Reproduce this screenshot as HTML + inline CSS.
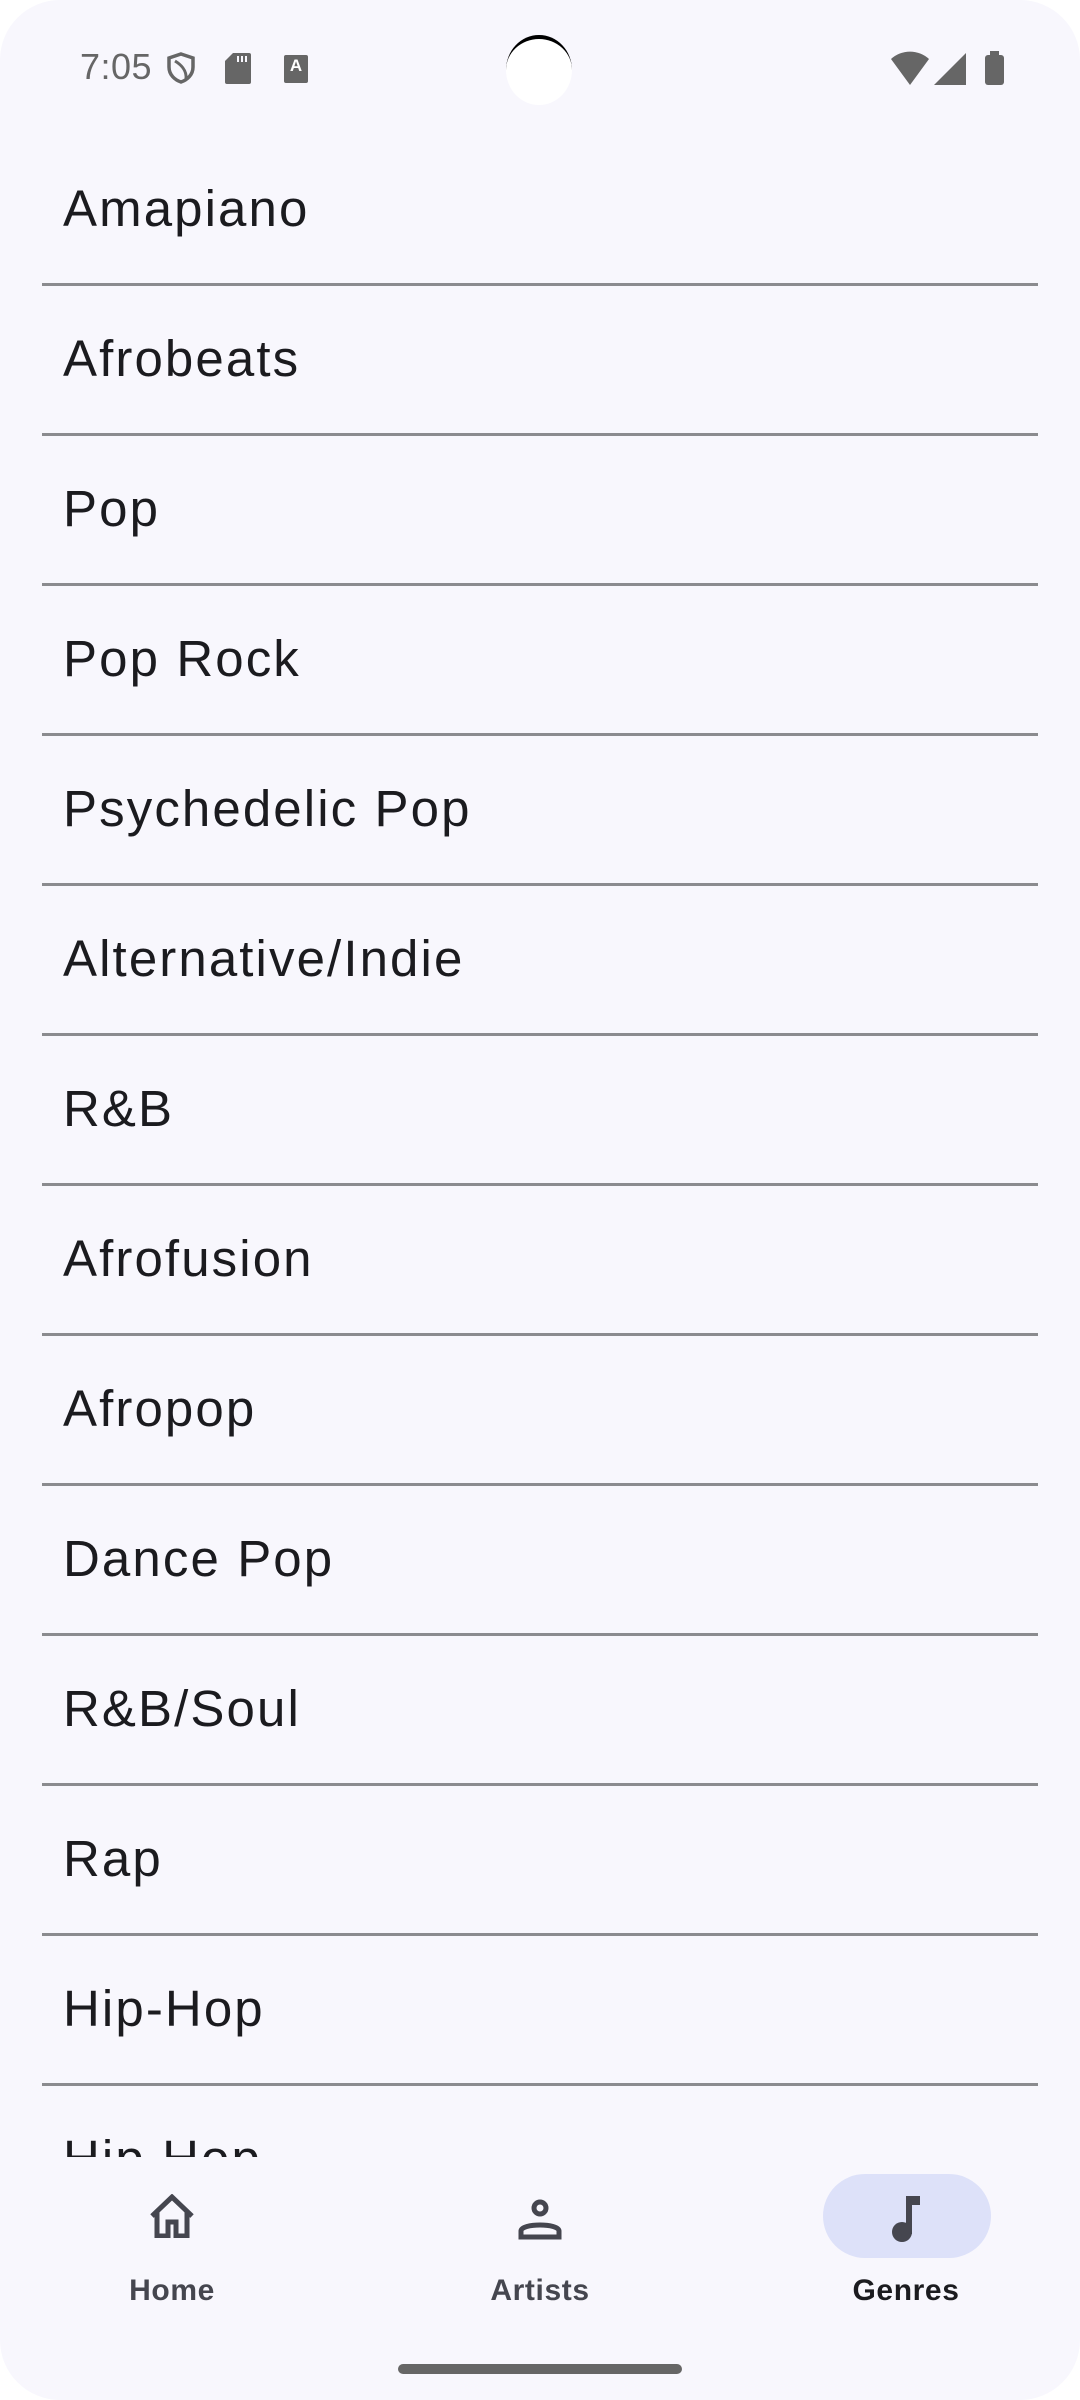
<!DOCTYPE html>
<html><head><style>
html,body{margin:0;padding:0;background:#fff}
#s{position:relative;width:1080px;height:2400px;background:#f8f7fd;border-radius:60px;overflow:hidden;font-family:"Liberation Sans",Roboto,sans-serif}
.row{position:absolute;left:63px;font-size:51px;color:#1b1b1f;line-height:60px;letter-spacing:2.1px;margin-top:1px}
.div{position:absolute;left:42px;width:996px;height:3px;background:#8b8b8f}
.lbl{position:absolute;top:2274px;font-size:30px;font-weight:bold;color:#45464f;text-align:center;width:200px;letter-spacing:0.6px}
</style></head><body><div id="s">
<div style="position:absolute;left:80px;top:46px;font-size:36px;color:#666;letter-spacing:0.5px">7:05</div>
<svg style="position:absolute;left:166px;top:52px" width="30" height="32" viewBox="0 0 30 32"><path d="M15 2 L27 6 V15 C27 23 21 28 15 30 C9 28 3 23 3 15 V6 Z" fill="none" stroke="#666" stroke-width="3.5"/><path d="M9 9 C14 12 21 18 20 27" fill="none" stroke="#666" stroke-width="3"/></svg>
<svg style="position:absolute;left:225px;top:53px" width="26" height="31"><path d="M8 0H24a2 2 0 0 1 2 2V29a2 2 0 0 1-2 2H2a2 2 0 0 1-2-2V8Z" fill="#666"/><rect x="12" y="3" width="2" height="6" fill="#f8f7fd"/><rect x="16" y="3" width="2" height="6" fill="#f8f7fd"/><rect x="20" y="3" width="2" height="6" fill="#f8f7fd"/></svg>
<div style="position:absolute;left:284px;top:55px;width:24px;height:28px;background:#666;border-radius:2px;color:#fff;font-size:17px;font-weight:bold;text-align:center;line-height:22px">A</div>
<div style="position:absolute;left:506px;top:35px;width:66px;height:70px;border-radius:50%;background:#fff;border-top:4px solid #000;box-sizing:border-box"></div>
<svg style="position:absolute;left:890px;top:51px" width="116" height="34"><path d="M1 8 A28 28 0 0 1 39 8 L20 34 Z" fill="#666"/><path d="M44 34 L76 2 V34 Z" fill="#666"/><rect x="95" y="4" width="19" height="30" rx="3" fill="#666"/><rect x="100" y="0" width="9" height="5" fill="#666"/></svg>
<div class="row" style="top:178px">Amapiano</div><div class="div" style="top:283px"></div>
<div class="row" style="top:328px">Afrobeats</div><div class="div" style="top:433px"></div>
<div class="row" style="top:478px">Pop</div><div class="div" style="top:583px"></div>
<div class="row" style="top:628px">Pop Rock</div><div class="div" style="top:733px"></div>
<div class="row" style="top:778px">Psychedelic Pop</div><div class="div" style="top:883px"></div>
<div class="row" style="top:928px">Alternative/Indie</div><div class="div" style="top:1033px"></div>
<div class="row" style="top:1078px">R&amp;B</div><div class="div" style="top:1183px"></div>
<div class="row" style="top:1228px">Afrofusion</div><div class="div" style="top:1333px"></div>
<div class="row" style="top:1378px">Afropop</div><div class="div" style="top:1483px"></div>
<div class="row" style="top:1528px">Dance Pop</div><div class="div" style="top:1633px"></div>
<div class="row" style="top:1678px">R&amp;B/Soul</div><div class="div" style="top:1783px"></div>
<div class="row" style="top:1828px">Rap</div><div class="div" style="top:1933px"></div>
<div class="row" style="top:1978px">Hip-Hop</div><div class="div" style="top:2083px"></div>
<div style="position:absolute;left:0;top:2080px;width:1080px;height:77px;overflow:hidden"><div class="row" style="top:48px">Hip Hop</div></div>
<div style="position:absolute;left:823px;top:2174px;width:168px;height:84px;border-radius:42px;background:#dde1f9"></div>
<svg style="position:absolute;left:146px;top:2194px" width="52" height="44" viewBox="0 0 52 44"><path d="M6 22 L26 3 L46 22 M11 18 V42 H22 V28 H30 V42 H41 V18" fill="none" stroke="#45464f" stroke-width="5"/></svg>
<svg style="position:absolute;left:518px;top:2198px" width="44" height="42"><circle cx="22" cy="10" r="6" fill="none" stroke="#45464f" stroke-width="5"/><path d="M3 39 V33 C3 25 41 25 41 33 V39 Z" fill="none" stroke="#45464f" stroke-width="5"/></svg>
<svg style="position:absolute;left:888px;top:2194px" width="36" height="50"><rect x="18" y="2" width="6" height="38" fill="#45464f"/><rect x="18" y="2" width="14" height="9" fill="#45464f"/><circle cx="14" cy="38" r="10" fill="#45464f"/></svg>
<div class="lbl" style="left:72px">Home</div>
<div class="lbl" style="left:440px">Artists</div>
<div class="lbl" style="left:806px;color:#1b1b1f">Genres</div>
<div style="position:absolute;left:398px;top:2364px;width:284px;height:10px;border-radius:5px;background:#666"></div>
</div></body></html>
